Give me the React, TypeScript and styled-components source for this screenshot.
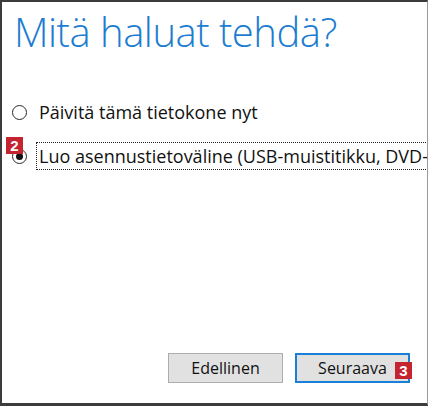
import React from "react";
import styled, { createGlobalStyle } from "styled-components";

const GlobalStyle = createGlobalStyle`
    html, body {
        margin: 0;
        padding: 0;
        background: #fff;
    }
`;

const Frame = styled.div`
    width: 428px;
    height: 406px;
    box-sizing: border-box;
    border-top: 2px solid #3c3c3c;
    border-left: 2px solid #3c3c3c;
    border-bottom: 3px solid #3c3c3c;
    border-right: 1px solid #9a9a9a;
    background: #fff;
    display: flex;
    flex-direction: column;
    overflow: hidden;
    font-family: "Open Sans", "Noto Sans", sans-serif;
`;

const Title = styled.h1`
    margin: 0;
    padding: 6px 0 0 12px;
    font-size: 40px;
    font-weight: 300;
    line-height: 48px;
    color: #1c7dd0;
    letter-spacing: -0.5px;
`;

const Options = styled.div`
    display: flex;
    flex-direction: column;
    gap: 14px;
    margin-top: 41px;
`;

const Option = styled.div`
    position: relative;
    display: flex;
    align-items: center;
    gap: 9px;
    padding-left: 10px;
    height: 30px;
    white-space: nowrap;
`;

const Radio = styled.span<{ $checked?: boolean }>`
    flex: none;
    box-sizing: border-box;
    width: 15px;
    height: 15px;
    border-radius: 50%;
    border: 1.5px solid #2a2a2a;
    background: #fff;
    display: flex;
    align-items: center;
    justify-content: center;
    &::after {
        content: "";
        display: ${(p) => (p.$checked ? "block" : "none")};
        width: 7px;
        height: 7px;
        border-radius: 50%;
        background: #111;
    }
`;

const Label = styled.span<{ $focused?: boolean }>`
    font-size: 18px;
    line-height: 20px;
    color: #111;
    padding: 3px 2px;
    border: 1px dotted ${(p) => (p.$focused ? "#222" : "transparent")};
    border-right: none;
`;

const Badge = styled.span`
    position: absolute;
    width: 17px;
    height: 17px;
    background: #c4242f;
    color: #fff;
    font-family: "Liberation Sans", Arial, sans-serif;
    font-weight: 700;
    font-size: 15px;
    line-height: 17px;
    text-align: center;
`;

const Spacer = styled.div`
    flex: 1;
`;

const ButtonRow = styled.div`
    display: flex;
    justify-content: flex-end;
    gap: 12px;
    padding: 0 17px 20px 0;
`;

const Button = styled.button<{ $primary?: boolean }>`
    position: relative;
    width: 115px;
    height: 30px;
    box-sizing: border-box;
    background: #e1e1e1;
    border: ${(p) => (p.$primary ? "2px solid #1a7fd6" : "1px solid #adadad")};
    font-family: "Open Sans", "Noto Sans", sans-serif;
    font-size: 16px;
    color: #111;
    padding: 0;
`;

export default function App() {
    return (
        <>
            <GlobalStyle />
            <Frame>
                <Title>Mitä haluat tehdä?</Title>
                <Options>
                    <Option>
                        <Radio />
                        <Label>Päivitä tämä tietokone nyt</Label>
                    </Option>
                    <Option>
                        <Badge style={{ left: 4, top: -4 }}>2</Badge>
                        <Radio $checked />
                        <Label $focused>Luo asennustietoväline (USB-muistitikku, DVD-</Label>
                    </Option>
                </Options>
                <Spacer />
                <ButtonRow>
                    <Button>Edellinen</Button>
                    <Button $primary>
                        Seuraava
                        <Badge style={{ left: 98, top: 7 }}>3</Badge>
                    </Button>
                </ButtonRow>
            </Frame>
        </>
    );
}
